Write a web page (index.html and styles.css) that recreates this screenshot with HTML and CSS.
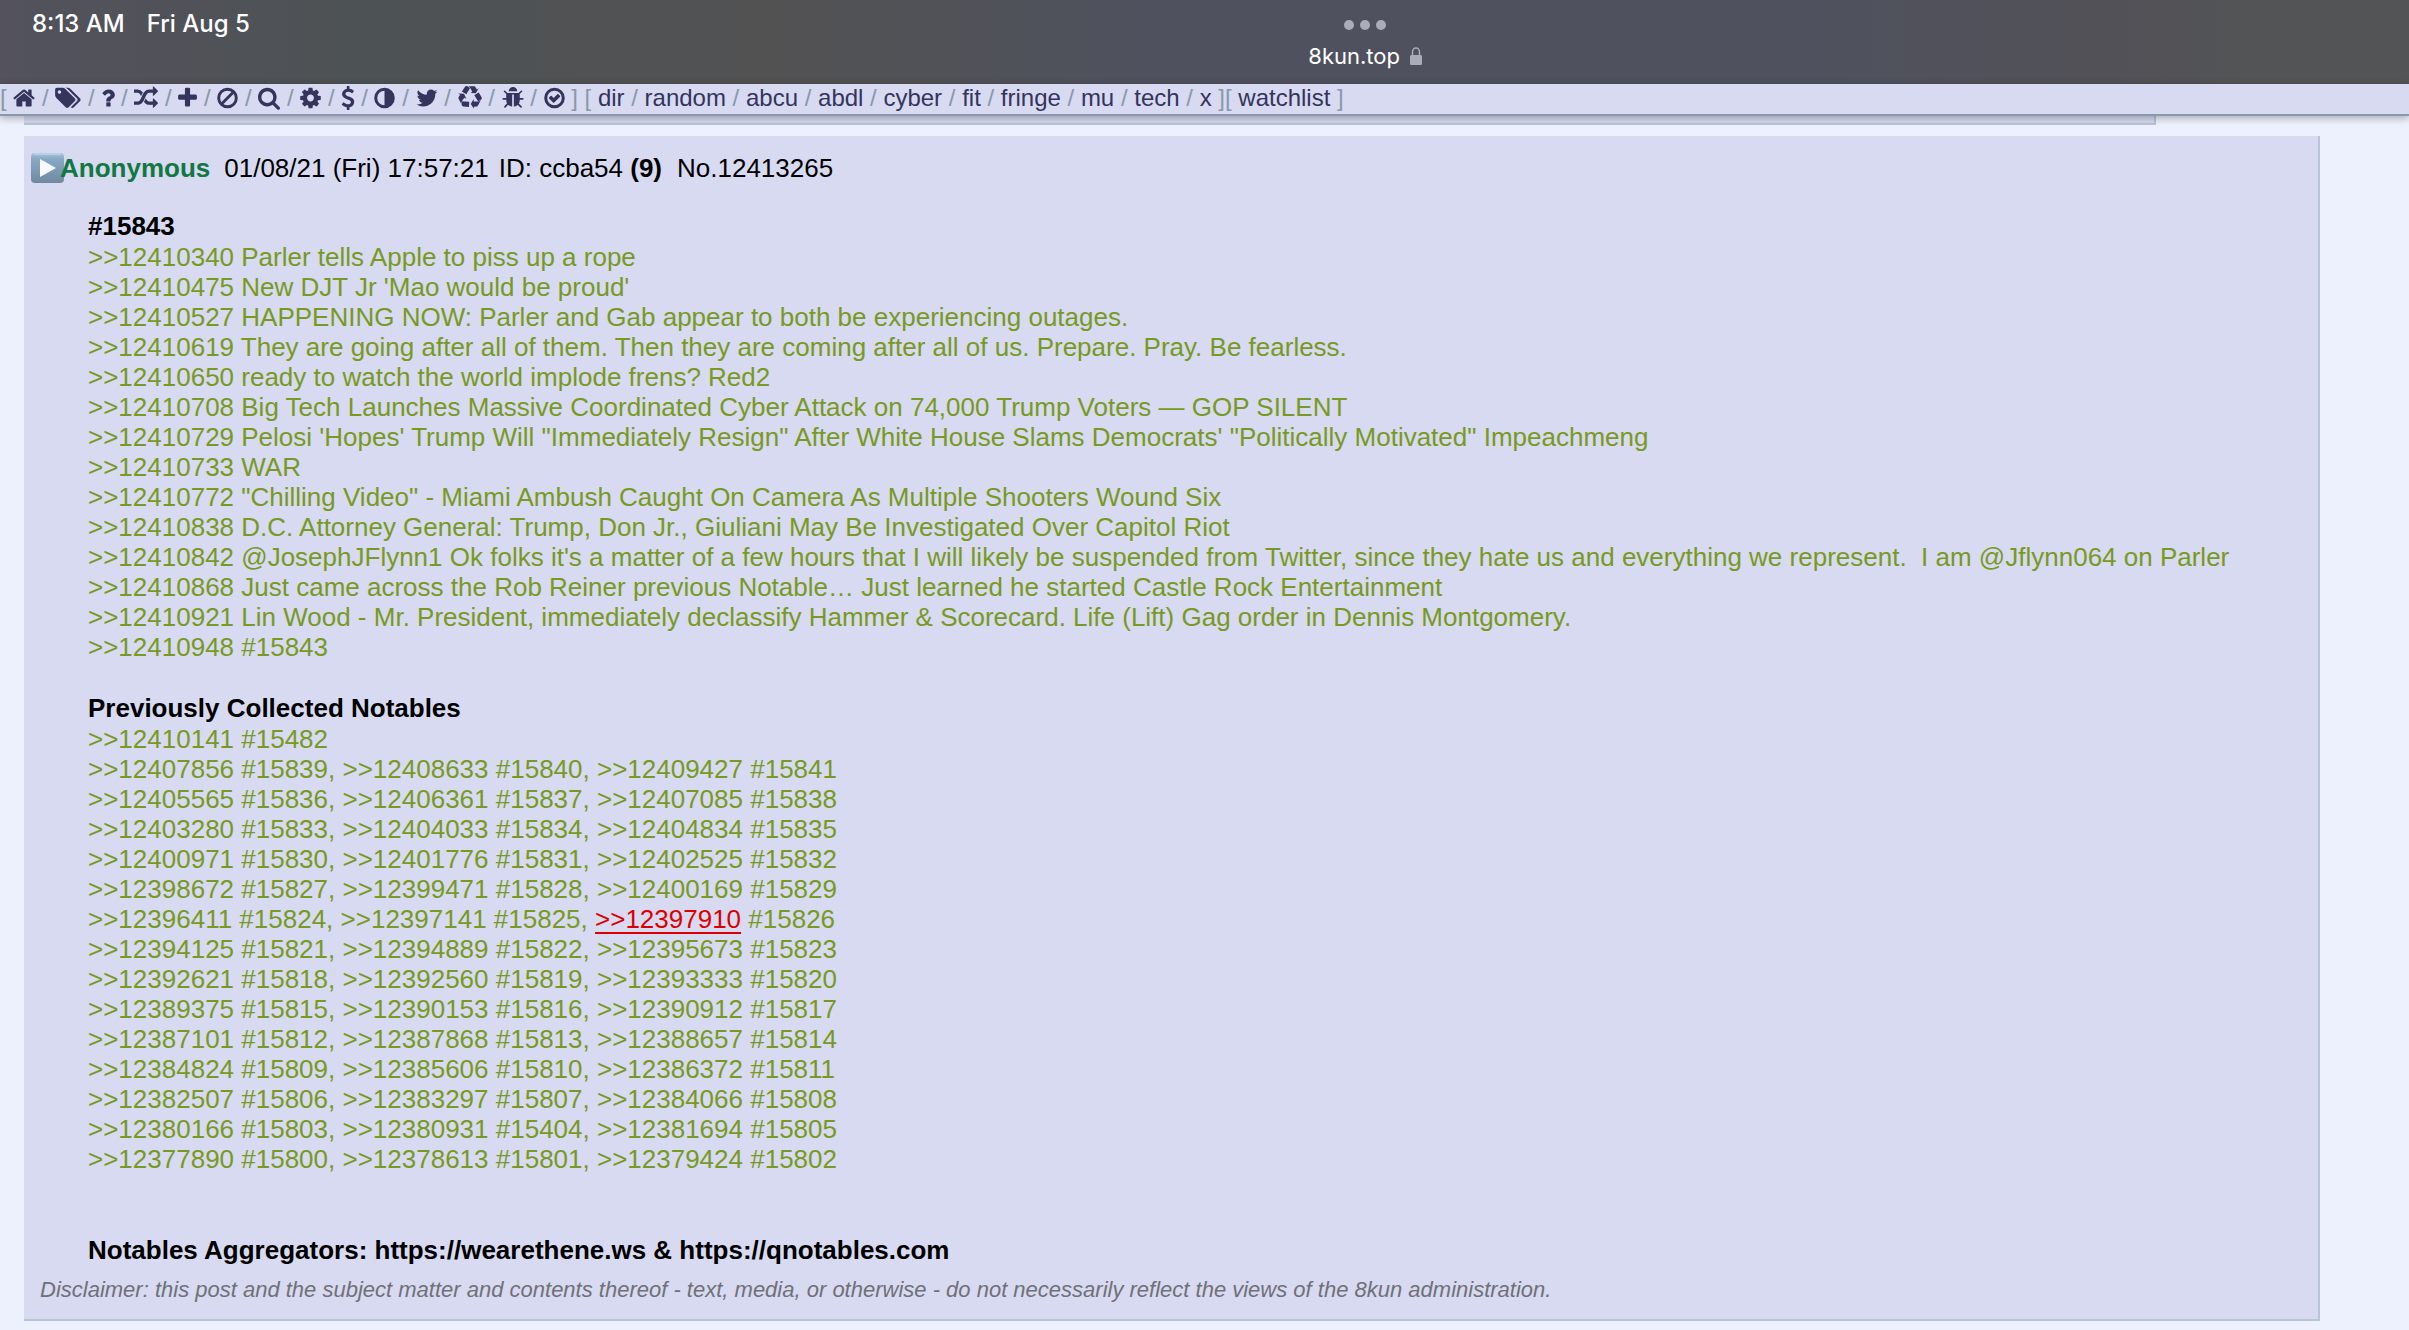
FILE: index.html
```html
<!DOCTYPE html>
<html lang="en">
<head>
<meta charset="utf-8">
<title>8kun.top</title>
<link rel="stylesheet" href="styles.css">
</head>
<body>
<header class="status">
  <div class="clock"><span>8:13 AM</span><span>Fri Aug 5</span></div>
  <div class="address">
    <div class="dots"><i></i><i></i><i></i></div>
    <div class="host">8kun.top
      <svg class="lock" viewBox="0 0 12 18"><path d="M2.500 9V5a3.500 4 0 0 1 7 0v4" fill="none" stroke="currentColor" stroke-width="1.500"/><rect y="8" width="12" height="10" rx="1.500"/></svg>
    </div>
  </div>
</header>

<nav class="boardlist">
[ <a href="#" aria-label="Home"><svg class="w22" viewBox="64 0 1664 1792"><path d="M1472 992v480q0 26-19 45t-45 19h-384v-384h-256v384h-384q-26 0-45-19t-19-45v-480q0-1 .5-3t.5-3l575-474 575 474q1 2 1 6zm223-69l-62 74q-8 9-21 11h-3q-13 0-21-7l-692-577-692 577q-12 8-24 7-13-2-21-11l-62-74q-8-10-7-23.500t11-21.500l719-599q32-26 76-26t76 26l244 204v-195q0-14 9-23t23-9h192q14 0 23 9t9 23v408l219 182q10 8 11 21.500t-7 23.500z"/></svg></a>
/ <a href="#" aria-label="Tags"><svg class="w26" viewBox="128 0 1920 1792"><path d="M576 448q0-53-37.500-90.500t-90.500-37.500-90.500 37.500-37.500 90.500 37.500 90.500 90.500 37.500 90.500-37.500 37.500-90.500zm1067 576q0 53-37 90l-491 492q-39 37-91 37-53 0-90-37l-715-716q-38-37-64.500-101t-26.500-117v-416q0-52 38-90t90-38h416q53 0 117 26.500t102 64.500l715 714q37 39 37 91zm384 0q0 53-37 90l-491 492q-39 37-91 37-36 0-59-14t-53-45l470-470q37-37 37-90 0-52-37-91l-715-714q-38-38-102-64.500t-117-26.500h224q53 0 117 26.500t102 64.500l715 714q37 39 37 91z"/></svg></a>
/ <a href="#" aria-label="FAQ"><svg class="w14" viewBox="384 0 1024 1792"><path d="M1088 1256v240q0 16-12 28t-28 12h-240q-16 0-28-12t-12-28v-240q0-16 12-28t28-12h240q16 0 28 12t12 28zm316-600q0 54-15.500 101t-35 76.500-55 59.500-57.500 43.500-61 35.500q-41 23-68.500 65t-27.500 67q0 17-12 32.500t-28 15.500h-240q-15 0-25.500-18.500t-10.500-37.500v-45q0-83 65-156.500t143-108.500q59-27 84-56t25-76q0-42-46.500-74t-107.500-32q-65 0-108 29-35 25-107 115-13 16-31 16-12 0-25-8l-164-125q-13-10-15.500-25t5.500-28q160-266 464-266 80 0 161 31t146 83 106 127.500 41 158.500z"/></svg></a>
/ <a href="#" aria-label="Random"><svg class="w24" viewBox="0 0 1792 1792"><path d="M666 481q-60 92-137 273-22-45-37-72.500t-40.500-63.500-51-56.500-63-35-81.500-14.500h-224q-14 0-23-9t-9-23v-192q0-14 9-23t23-9h224q250 0 410 225zm1126 799q0 14-9 23l-320 320q-9 9-23 9-13 0-22.500-9.500t-9.500-22.500v-192q-32 0-85 .5t-81 1-73-1-71-5-64-10.500-63-18.500-58-28.500-59-40-55-53.500-56-69.500q59-93 136-273 22 45 37 72.500t40.500 63.500 51 56.500 63 35 81.500 14.500h256v-192q0-14 9-23t23-9q12 0 24 10l319 319q9 9 9 23zm0-896q0 14-9 23l-320 320q-9 9-23 9-13 0-22.500-9.500t-9.500-22.500v-192h-256q-48 0-87 15t-69 45-51 61.500-45 77.500q-32 62-78 171-29 66-49.500 111t-54 105-64 100-74 83-90 68.500-106.500 42-128 16.500h-224q-14 0-23-9t-9-23v-192q0-14 9-23t23-9h224q48 0 87-15t69-45 51-61.500 45-77.500q32-62 78-171 29-66 49.500-111t54-105 64-100 74-83 90-68.500 106.500-42 128-16.500h256v-192q0-14 9-23t23-9q12 0 24 10l319 319q9 9 9 23z"/></svg></a>
/ <a href="#" aria-label="New board"><svg class="w19" viewBox="192 0 1408 1792"><path d="M1600 736v192q0 40-28 68t-68 28h-416v416q0 40-28 68t-68 28h-192q-40 0-68-28t-28-68v-416h-416q-40 0-68-28t-28-68v-192q0-40 28-68t68-28h416v-416q0-40 28-68t68-28h192q40 0 68 28t28 68v416h416q40 0 68 28t28 68z"/></svg></a>
/ <a href="#" aria-label="Bans"><svg class="w21" viewBox="128 0 1536 1792"><g fill="none" stroke="currentColor" stroke-width="218"><circle cx="896" cy="896" r="659"/><path d="M430 1362L1362 430"/></g></svg></a>
/ <a href="#" aria-label="Search"><svg class="w22" viewBox="64 0 1664 1792"><path d="M1216 832q0-185-131.500-316.500t-316.500-131.500-316.500 131.500-131.500 316.500 131.500 316.500 316.500 131.500 316.500-131.500 131.500-316.500zm512 832q0 52-38 90t-90 38q-54 0-90-38l-343-342q-179 124-399 124-143 0-273.500-55.500t-225-150-150-225-55.500-273.500 55.500-273.500 150-225 225-150 273.500-55.500 273.500 55.500 225 150 150 225 55.500 273.500q0 220-124 399l343 343q37 37 37 90z"/></svg></a>
/ <a href="#" aria-label="Manage"><svg class="w21" viewBox="128 0 1536 1792"><path d="M1152 896q0-106-75-181t-181-75-181 75-75 181 75 181 181 75 181-75 75-181zm512-109v222q0 12-8 23t-20 13l-185 28q-19 54-39 91 35 50 107 138 10 12 10 25t-9 23q-27 37-99 108t-94 71q-12 0-26-9l-138-108q-44 23-91 38-16 136-29 186-7 28-36 28h-222q-14 0-24.500-8.500t-11.500-21.500l-28-184q-49-16-90-37l-141 107q-10 9-25 9-14 0-25-11-126-114-165-168-7-10-7-23 0-12 8-23 15-21 51-66.500t54-70.500q-27-50-41-99l-183-27q-13-2-21-12.500t-8-23.500v-222q0-12 8-23t19-13l186-28q14-46 39-92-40-57-107-138-10-12-10-24 0-10 9-23 26-36 98.500-107.500t94.500-71.500q13 0 26 10l138 107q44-23 91-38 16-136 29-186 7-28 36-28h222q14 0 24.500 8.500t11.500 21.500l28 184q49 16 90 37l142-107q9-9 24-9 13 0 25 10 129 119 165 170 7 8 7 22 0 12-8 23-15 21-51 66.500t-54 70.500q26 50 41 98l183 28q13 2 21 12.500t8 23.500z"/></svg></a>
/ <a href="#" aria-label="Donate"><svg class="w14" viewBox="384 0 1024 1792"><path d="M1362 1185q0 153-99.500 263.500t-258.500 136.500v175q0 14-9 23t-23 9h-135q-13 0-22.500-9.500t-9.500-22.500v-175q-66-9-127.500-31t-101.500-44.500-74-48-46.500-37.500-17.500-18q-17-21-2-41l103-135q7-10 23-12 15-2 24 9l2 2q113 99 243 125 37 8 74 8 81 0 142.500-43t61.500-122q0-28-15-53t-33.500-42-58.500-37.500-66-32-80-32.500q-39-16-61.500-25t-61.500-26.500-62.500-31-56.500-35.500-53.500-42.500-43.500-49-35.500-58-21-66.500-8.500-78q0-138 98-242t255-134v-180q0-13 9.500-22.500t22.500-9.500h135q14 0 23 9t9 23v176q57 6 110.500 23t87 33.500 63.500 37.500 39 29 15 14q17 18 5 38l-81 146q-8 15-23 16-14 3-27-7-3-3-14.500-12t-39-26.500-58.500-32-74.500-26-85.500-11.500q-95 0-155 43t-60 111q0 26 8.500 48t29.500 41.500 39.500 33 56 31 60.500 27 70 27.500q53 20 81 31.500t76 35 75.500 42.500 62 50 53 63.500 31.500 76.500 13 94z"/></svg></a>
/ <a href="#" aria-label="Contrast"><svg class="w21" viewBox="128 0 1536 1792"><circle cx="896" cy="896" r="656" fill="none" stroke="currentColor" stroke-width="224"/><path d="M896 240v1312a656 656 0 0 0 0-1312z"/></svg></a>
/ <a href="#" aria-label="Twitter"><svg class="w22" viewBox="64 0 1664 1792"><path d="M1684 408q-67 98-162 167 1 14 1 42 0 130-38 259.500t-115.500 248.500-184.500 210.500-258 146-323 54.500q-271 0-496-145 35 4 78 4 225 0 401-138-105-2-188-64.500t-114-159.500q33 5 61 5 43 0 85-11-112-23-185.500-111.500t-73.500-205.500v-4q68 38 146 41-66-44-105-115t-39-154q0-88 44-163 121 149 294.500 238.500t371.500 99.500q-8-38-8-74 0-134 94.500-228.500t228.500-94.500q140 0 236 102 109-21 205-78-37 115-142 178 93-10 186-50z"/></svg></a>
/ <a href="#" aria-label="Recycle"><svg class="w24" viewBox="0 0 1792 1792"><path d="M836 1169l-15 368-2 22-420-29q-36-3-67-31.500t-47-65.500q-11-27-14.500-55t4-65 12-55 21.500-64 19-53q78 12 509 28zm-387-586l180 379-147-92q-63 72-111.500 144.500t-72.500 125-39.500 94.500-18.500 63l-4 21-190-357q-17-26-18-56t6-47l8-18q35-63 114-188l-140-86zm1231 517l-188 359q-12 29-36.500 46.500t-43.500 20.500l-18 4q-71 7-219 12l8 164-230-367 211-362 7 173q170 16 283 5t170-33zm-785-924q-47 63-265 435l-317-187-19-12 225-356q20-31 60-45t80-10q24 2 48.500 12t42 21 41.500 33 36 34.500 36 39.500 32 35zm655 307l212 363q18 37 12.500 76t-27.500 74q-13 20-33 37t-38 28-48.500 22-47 16-51.500 14-46 12q-34-72-265-436l313-195zm-143-226l142-83-220 373-419-20 151-86q-34-89-75-166t-75.500-123.500-64.500-80-47-46.500l-17-13 405 1q31-3 58 10.500t39 28.500l11 15q39 61 112 190z"/></svg></a>
/ <a href="#" aria-label="Bugs"><svg class="w22" viewBox="64 0 1664 1792"><path d="M1696 960q0 26-19 45t-45 19h-224q0 171-67 290l208 209q19 19 19 45t-19 45q-18 19-45 19t-45-19l-198-197q-5 5-15 13t-42 28.500-65 36.500-82 29-97 13v-896h-128v896q-51 0-101.500-13.500t-87-33-66-39-43.500-32.500l-15-14-183 207q-20 21-48 21-24 0-43-16-19-18-20.500-44.500t15.500-46.500l202-227q-58-114-58-274h-224q-26 0-45-19t-19-45 19-45 45-19h224v-294l-173-173q-19-19-19-45t19-45 45-19 45 19l173 173h844l173-173q19-19 45-19t45 19 19 45-19 45l-173 173v294h224q26 0 45 19t19 45zm-480-576h-640q0-133 93.500-226.500t226.500-93.500 226.500 93.500 93.500 226.500z"/></svg></a>
/ <a href="#" aria-label="Status"><svg class="w21" viewBox="128 0 1536 1792"><path d="M1299 813l-422 422q-19 19-45 19t-45-19l-294-294q-19-19-19-45t19-45l102-102q19-19 45-19t45 19l147 147 275-275q19-19 45-19t45 19l102 102q19 19 19 45t-19 45z"/><circle cx="896" cy="896" r="656" fill="none" stroke="currentColor" stroke-width="224"/></svg></a> ]
[ <a href="#">dir</a> / <a href="#">random</a> / <a href="#">abcu</a> / <a href="#">abdl</a> / <a href="#">cyber</a> / <a href="#">fit</a> / <a href="#">fringe</a> / <a href="#">mu</a> / <a href="#">tech</a> / <a href="#">x</a> ][ <a href="#">watchlist</a> ]
</nav>

<main class="thread">
  <div class="post previous"></div>
  <article class="post">
    <div class="intro">
      <svg class="play" viewBox="0 0 33 30"><defs><linearGradient id="g" x2="0" y2="1"><stop offset="0" stop-color="#a9c4da"/><stop offset=".2" stop-color="#86a9c6"/><stop offset="1" stop-color="#7189a0"/></linearGradient></defs><rect width="33" height="30" rx="4" fill="url(#g)"/><path d="M3 1h27" stroke="#b9d0e0" stroke-width="2"/><path d="M9 6v18l16-9z" fill="#f7f9ff"/></svg>
      <div class="meta"><b class="name">Anonymous</b><span class="date">01/08/21 (Fri) 17:57:21</span><span class="id">ID: ccba54 <b>(9)</b></span><span class="number">No.12413265</span></div>
    </div>
    <div class="body">
      <section class="notables">
        <h2>#15843</h2>
        <p>&gt;&gt;12410340 Parler tells Apple to piss up a rope</p>
        <p>&gt;&gt;12410475 New DJT Jr 'Mao would be proud'</p>
        <p>&gt;&gt;12410527 HAPPENING NOW: Parler and Gab appear to both be experiencing outages.</p>
        <p>&gt;&gt;12410619 They are going after all of them. Then they are coming after all of us. Prepare. Pray. Be fearless.</p>
        <p>&gt;&gt;12410650 ready to watch the world implode frens? Red2</p>
        <p>&gt;&gt;12410708 Big Tech Launches Massive Coordinated Cyber Attack on 74,000 Trump Voters — GOP SILENT</p>
        <p>&gt;&gt;12410729 Pelosi 'Hopes' Trump Will "Immediately Resign" After White House Slams Democrats' "Politically Motivated" Impeachmeng</p>
        <p>&gt;&gt;12410733 WAR</p>
        <p>&gt;&gt;12410772 "Chilling Video" - Miami Ambush Caught On Camera As Multiple Shooters Wound Six</p>
        <p>&gt;&gt;12410838 D.C. Attorney General: Trump, Don Jr., Giuliani May Be Investigated Over Capitol Riot</p>
        <p>&gt;&gt;12410842 @JosephJFlynn1 Ok folks it's a matter of a few hours that I will likely be suspended from Twitter, since they hate us and everything we represent.&nbsp; I am @Jflynn064 on Parler</p>
        <p>&gt;&gt;12410868 Just came across the Rob Reiner previous Notable… Just learned he started Castle Rock Entertainment</p>
        <p>&gt;&gt;12410921 Lin Wood - Mr. President, immediately declassify Hammer &amp; Scorecard. Life (Lift) Gag order in Dennis Montgomery.</p>
        <p>&gt;&gt;12410948 #15843</p>
      </section>
      <section class="notables">
        <h2>Previously Collected Notables</h2>
        <p>&gt;&gt;12410141 #15482</p>
        <p>&gt;&gt;12407856 #15839, &gt;&gt;12408633 #15840, &gt;&gt;12409427 #15841</p>
        <p>&gt;&gt;12405565 #15836, &gt;&gt;12406361 #15837, &gt;&gt;12407085 #15838</p>
        <p>&gt;&gt;12403280 #15833, &gt;&gt;12404033 #15834, &gt;&gt;12404834 #15835</p>
        <p>&gt;&gt;12400971 #15830, &gt;&gt;12401776 #15831, &gt;&gt;12402525 #15832</p>
        <p>&gt;&gt;12398672 #15827, &gt;&gt;12399471 #15828, &gt;&gt;12400169 #15829</p>
        <p>&gt;&gt;12396411 #15824, &gt;&gt;12397141 #15825, <a class="cite" href="#">&gt;&gt;12397910</a> #15826</p>
        <p>&gt;&gt;12394125 #15821, &gt;&gt;12394889 #15822, &gt;&gt;12395673 #15823</p>
        <p>&gt;&gt;12392621 #15818, &gt;&gt;12392560 #15819, &gt;&gt;12393333 #15820</p>
        <p>&gt;&gt;12389375 #15815, &gt;&gt;12390153 #15816, &gt;&gt;12390912 #15817</p>
        <p>&gt;&gt;12387101 #15812, &gt;&gt;12387868 #15813, &gt;&gt;12388657 #15814</p>
        <p>&gt;&gt;12384824 #15809, &gt;&gt;12385606 #15810, &gt;&gt;12386372 #15811</p>
        <p>&gt;&gt;12382507 #15806, &gt;&gt;12383297 #15807, &gt;&gt;12384066 #15808</p>
        <p>&gt;&gt;12380166 #15803, &gt;&gt;12380931 #15404, &gt;&gt;12381694 #15805</p>
        <p>&gt;&gt;12377890 #15800, &gt;&gt;12378613 #15801, &gt;&gt;12379424 #15802</p>
      </section>
      <h2 class="aggregators">Notables Aggregators: https://wearethene.ws &amp; https://qnotables.com</h2>
    </div>
    <footer class="disclaimer">Disclaimer: this post and the subject matter and contents thereof - text, media, or otherwise - do not necessarily reflect the views of the 8kun administration.</footer>
  </article>
</main>
</body>
</html>
```

FILE: styles.css
```css
* { box-sizing: border-box; }

body {
  margin: 0;
  background: #edf0fd;
  color: #000;
  font: 26px/30px "Liberation Sans", Arial, sans-serif;
}

svg { fill: currentColor; }

/* tablet status bar */
.status {
  display: grid;
  grid-template-columns: 57fr auto 43fr;
  height: 84px;
  color: #fff;
  font: 24px/28px Inter, sans-serif;
  background: linear-gradient(90deg, #53525d 0, #4d5254 15%, #525253 32%, #4f525e 48%, #4f525e 75%, #525158 87%, #535456 93%, #535456 100%);
}
.clock { display: flex; gap: 22px; padding: 10px 0 0 32px; font-weight: 500; }
.address { padding-top: 20px; }
.dots { display: flex; justify-content: center; gap: 6px; margin-bottom: 12px; }
.dots i { width: 10px; height: 10px; border-radius: 50%; background: #abacb9; }
.host { display: flex; align-items: center; gap: 10px; font-size: 22px; }
.lock { width: 12px; height: 18px; color: #abacb9; }

/* board navigation */
.boardlist {
  position: relative;
  height: 32px;
  border-bottom: 2px solid #8899aa;
  box-shadow: 0 2px 8px rgba(0, 0, 0, .3);
  background: #d7daf0;
  color: #8899aa;
  font-size: 24px;
  line-height: 28px;
  white-space: nowrap;
}
.boardlist a { color: #34345c; text-decoration: none; }
.boardlist svg { height: 24px; vertical-align: -4px; }
.w14 { width: 14px; margin-right: -1px; }
.w19 { width: 19px; }
.w21 { width: 21px; }
.w22 { width: 22px; }
.w24 { width: 24px; }
.w26 { width: 26px; }

/* posts */
.post {
  margin: 0 89px 0 24px;
  padding: 17px 7px 14px;
  background: #d7daf0;
  border: solid #b7c5d9;
  border-width: 0 2px 2px 0;
}
.previous { height: 9px; margin: 0 253px 11px 24px; padding: 0; }

.intro { display: flex; align-items: center; }
.play { width: 33px; height: 30px; }
.meta { display: flex; margin-left: -4px; }
.name { margin-right: 14px; color: #117743; }
.date { margin-right: 10px; }
.id { margin-right: 15px; }

.body { padding: 28px 0 0 57px; }
.notables { margin-bottom: 31px; }
.notables h2 { margin-bottom: 1px; }
.notables + .aggregators { margin-top: 61px; }
p, h2 { margin: 0; font-size: 26px; }
p { color: #789922; }
.cite { color: #dd0000; text-underline-offset: 4px; }
.disclaimer { margin: 10px 0 0 9px; color: #707078; font-size: 22px; font-style: italic; }
```
